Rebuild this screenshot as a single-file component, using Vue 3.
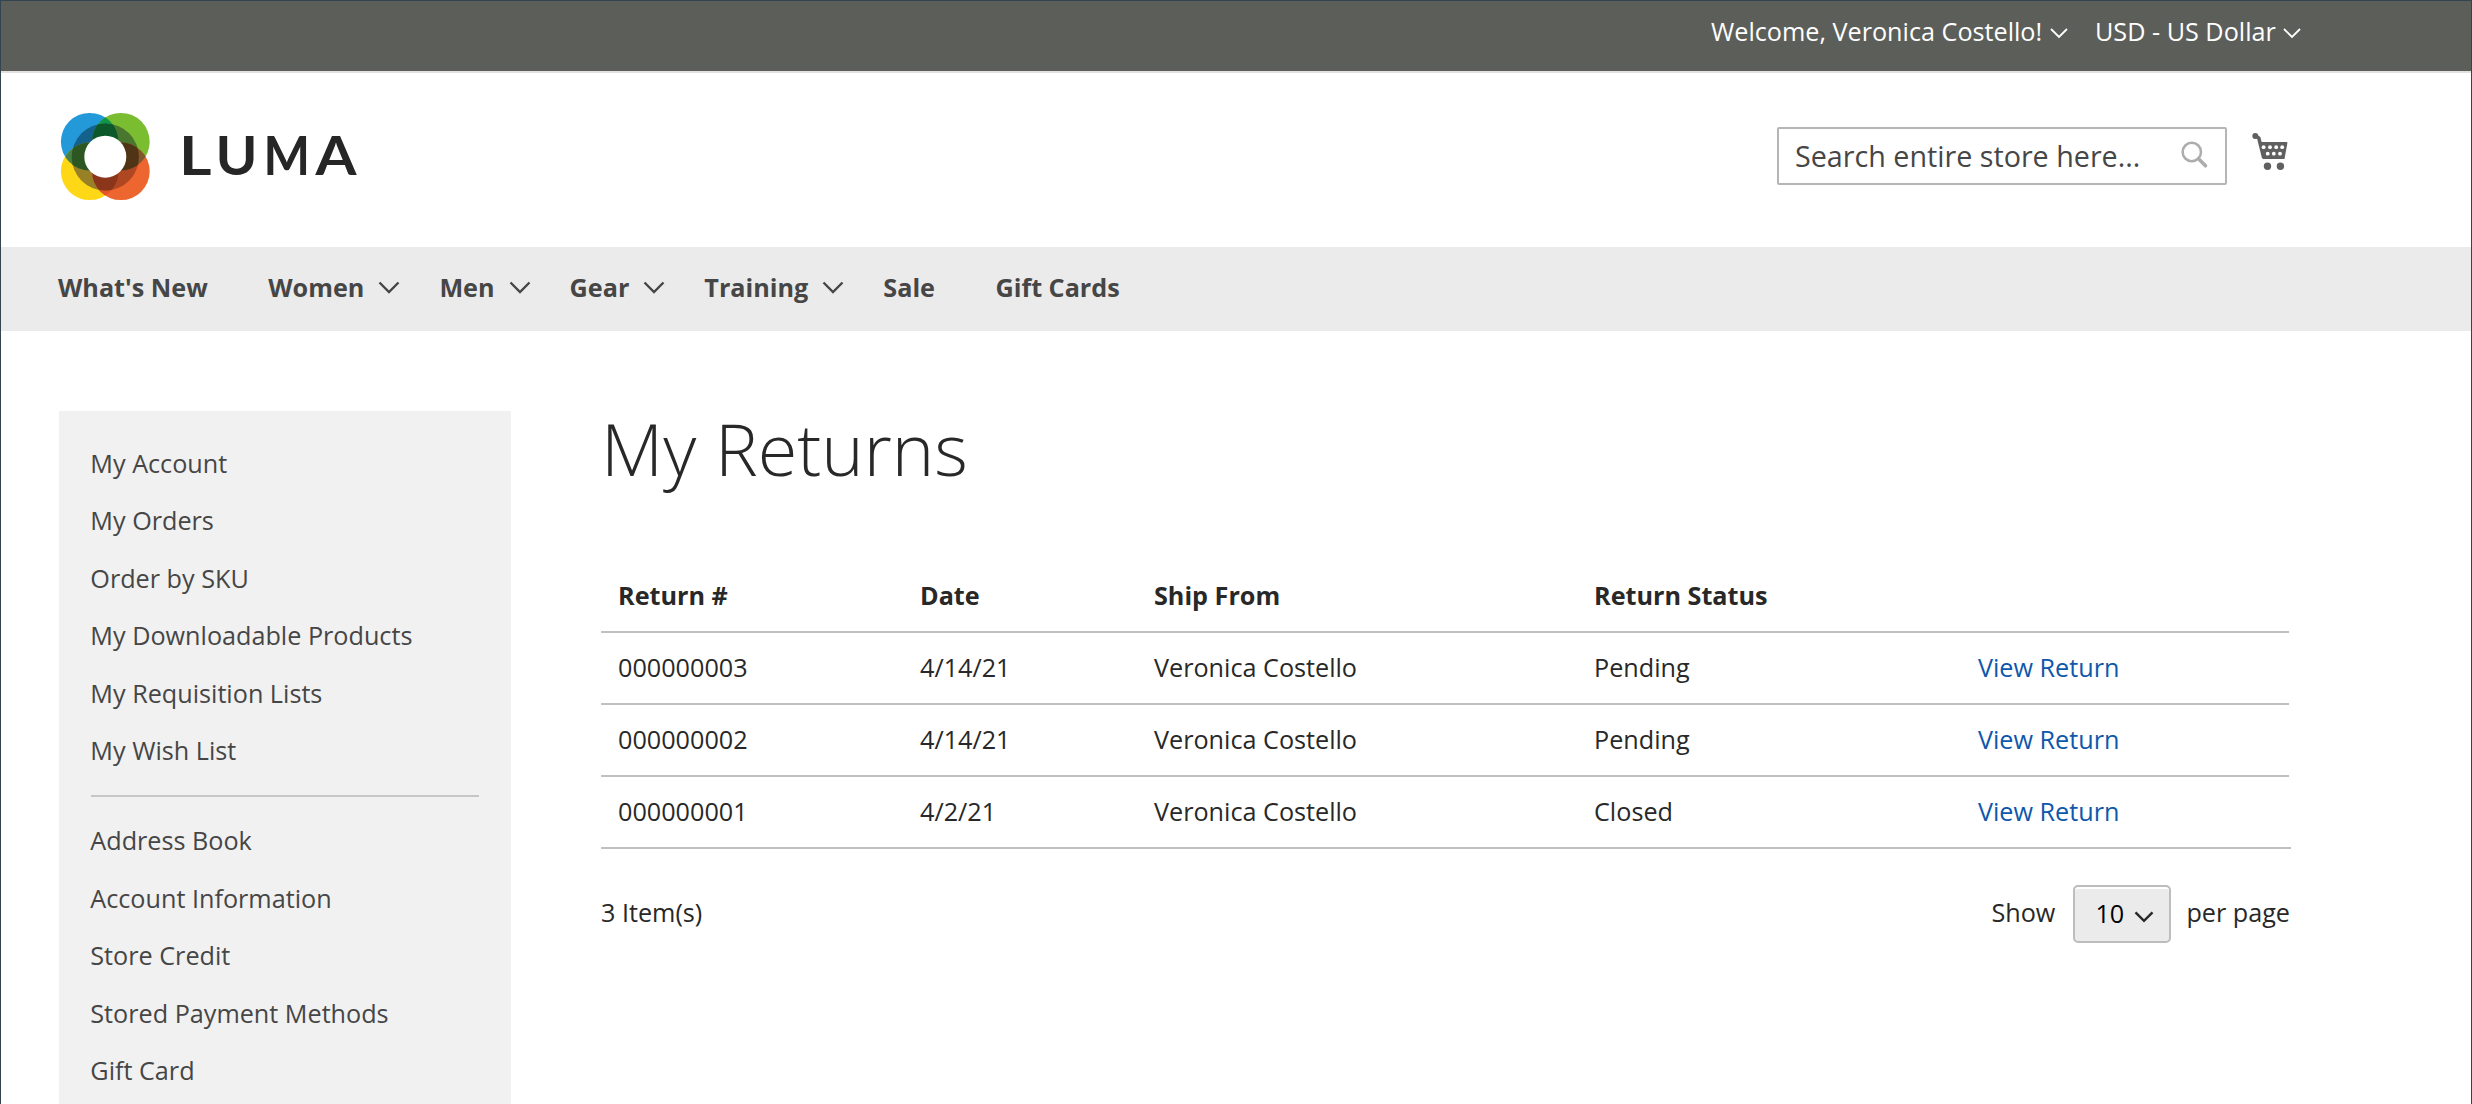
<script setup>
const nav = [
  { label: "What's New" },
  { label: 'Women', sub: true },
  { label: 'Men', sub: true },
  { label: 'Gear', sub: true },
  { label: 'Training', sub: true },
  { label: 'Sale' },
  { label: 'Gift Cards' },
]
const accountLinks = ['My Account', 'My Orders', 'Order by SKU', 'My Downloadable Products', 'My Requisition Lists', 'My Wish List']
const settingsLinks = ['Address Book', 'Account Information', 'Store Credit', 'Stored Payment Methods', 'Gift Card']
const returns = [
  { id: '000000003', date: '4/14/21', from: 'Veronica Costello', status: 'Pending' },
  { id: '000000002', date: '4/14/21', from: 'Veronica Costello', status: 'Pending' },
  { id: '000000001', date: '4/2/21', from: 'Veronica Costello', status: 'Closed' },
]
</script>

<template>
  <div class="page">
    <div class="panel">
      <span class="welcome">Welcome, Veronica Costello!</span>
      <svg class="chev-top" width="18" height="11" viewBox="0 0 18 11"><path d="M1 1l8 8 8-8" /></svg>
      <span class="currency">USD - US Dollar</span>
      <svg class="chev-top" width="18" height="11" viewBox="0 0 18 11"><path d="M1 1l8 8 8-8" /></svg>
    </div>

    <header class="header">
      <svg class="logo" width="300" height="90" viewBox="60 112 300 90">
        <defs>
          <clipPath id="blue"><circle cx="89.7" cy="141.7" r="28.8" /></clipPath>
          <clipPath id="green"><circle cx="120.9" cy="141.7" r="28.8" /></clipPath>
          <clipPath id="yellow"><circle cx="89.7" cy="171.3" r="28.8" /></clipPath>
          <clipPath id="orange"><circle cx="120.9" cy="171.3" r="28.8" /></clipPath>
        </defs>
        <circle cx="89.7" cy="141.7" r="28.8" fill="#2499da" />
        <circle cx="120.9" cy="141.7" r="28.8" fill="#7bbd31" />
        <circle cx="89.7" cy="171.3" r="28.8" fill="#fed817" />
        <circle cx="120.9" cy="171.3" r="28.8" fill="#ee662f" />
        <circle cx="120.9" cy="141.7" r="28.8" fill="#109547" clip-path="url(#blue)" />
        <circle cx="89.7" cy="171.3" r="28.8" fill="#48804a" clip-path="url(#blue)" />
        <circle cx="120.9" cy="171.3" r="28.8" fill="#80572f" clip-path="url(#green)" />
        <circle cx="120.9" cy="171.3" r="28.8" fill="#e65425" clip-path="url(#yellow)" />
        <circle cx="105.3" cy="157" r="33.6" fill="#14628c" clip-path="url(#blue)" />
        <circle cx="105.3" cy="157" r="33.6" fill="#4a772f" clip-path="url(#green)" />
        <circle cx="105.3" cy="157" r="33.6" fill="#988026" clip-path="url(#yellow)" />
        <circle cx="105.3" cy="157" r="33.6" fill="#af4723" clip-path="url(#orange)" />
        <g clip-path="url(#blue)">
          <g clip-path="url(#green)"><circle cx="105.3" cy="157" r="33.6" fill="#0d582b" /></g>
          <g clip-path="url(#yellow)"><circle cx="105.3" cy="157" r="33.6" fill="#2c5723" /></g>
        </g>
        <g clip-path="url(#orange)">
          <g clip-path="url(#green)"><circle cx="105.3" cy="157" r="33.6" fill="#503416" /></g>
          <g clip-path="url(#yellow)"><circle cx="105.3" cy="157" r="33.6" fill="#8b351b" /></g>
        </g>
        <circle cx="105.3" cy="156.7" r="21" fill="#fff" />
        <text class="wordmark" y="175"><tspan x="179" textLength="32.5" lengthAdjust="spacingAndGlyphs">L</tspan><tspan x="215.5" textLength="42" lengthAdjust="spacingAndGlyphs">U</tspan><tspan x="263.4" textLength="46.5" lengthAdjust="spacingAndGlyphs">M</tspan><tspan x="315.5" textLength="41" lengthAdjust="spacingAndGlyphs">A</tspan></text>
      </svg>
      <div class="search">
        <span>Search entire store here...</span>
        <svg width="30" height="30" viewBox="0 0 30 30"><circle cx="12.8" cy="11" r="9.2" fill="none" stroke="#adadad" stroke-width="2.5" /><path d="M19.5 17.8l7 7" stroke="#adadad" stroke-width="3.6" stroke-linecap="round" /></svg>
      </div>
      <svg class="cart" width="38" height="38" viewBox="0 0 38 38">
        <circle cx="3.3" cy="3" r="3" fill="#606060" />
        <path d="M3 2.5L6.8 5 11.8 25" fill="none" stroke="#606060" stroke-width="3.6" />
        <path d="M7 9H34.6Q35.6 9 35.4 10L32.5 26H11z" fill="#606060" />
        <g fill="#fff">
          <circle cx="11.6" cy="14.2" r="1.9" /><circle cx="18" cy="14.2" r="1.9" /><circle cx="24.2" cy="14.2" r="1.9" /><circle cx="30.2" cy="14.2" r="1.9" />
          <circle cx="15.7" cy="20.7" r="1.9" /><circle cx="21.8" cy="20.7" r="1.9" /><circle cx="28" cy="20.7" r="1.9" />
        </g>
        <circle cx="15.5" cy="33.3" r="3.7" fill="#606060" /><circle cx="28.4" cy="33.3" r="3.7" fill="#606060" />
      </svg>
    </header>

    <nav class="nav">
      <a v-for="n in nav" :key="n.label" :class="{ sub: n.sub }">
        <span>{{ n.label }}</span>
        <svg v-if="n.sub" width="22" height="14" viewBox="0 0 22 14"><path d="M1.5 1.5l9.5 9.5 9.5-9.5" /></svg>
      </a>
    </nav>

    <main class="content">
      <aside class="sidebar">
        <a v-for="l in accountLinks" :key="l">{{ l }}</a>
        <hr />
        <a v-for="l in settingsLinks" :key="l">{{ l }}</a>
      </aside>
      <section class="main">
        <h1>My Returns</h1>
        <div class="row head">
          <span>Return #</span><span>Date</span><span>Ship From</span><span>Return Status</span><span></span>
        </div>
        <div v-for="r in returns" :key="r.id" class="row">
          <span>{{ r.id }}</span><span>{{ r.date }}</span><span>{{ r.from }}</span><span>{{ r.status }}</span><a>View Return</a>
        </div>
        <div class="toolbar">
          <span class="count">3 Item(s)</span>
          <span>Show</span>
          <div class="select">
            <span>10</span>
            <svg width="20" height="12" viewBox="0 0 20 12"><path d="M1.5 1.3l8.5 8.5 8.5-8.5" /></svg>
          </div>
          <span>per page</span>
        </div>
      </section>
    </main>
  </div>
</template>

<style>
body { margin: 0; overflow: hidden; }
</style>

<style scoped>
.page {
  box-sizing: border-box;
  width: 2472px;
  height: 1104px;
  overflow: hidden;
  border: 1px solid #344551;
  border-bottom: 0;
  background: #fff;
  color: #282828;
  font: 25.2px/36px "Open Sans", "Noto Sans", sans-serif;
  white-space: nowrap;
}
.panel {
  box-sizing: border-box;
  height: 72px;
  display: flex;
  padding: 12px 0 0 1710px;
  background: #5c5e5a;
  border-bottom: 2px solid #e4e0e1;
  color: #fff;
}
.welcome { width: 339px; }
.currency { width: 188px; margin-left: 27px; }
.chev-top { margin-top: 15px; }
.chev-top path { fill: none; stroke: #fff; stroke-width: 1.8; }
.header { height: 174px; display: flex; align-items: flex-start; }
.logo { margin: 39px 1417px 0 59px; flex: none; }
.wordmark { font: 700 53px Lato, sans-serif; fill: #262626; }
.search {
  box-sizing: border-box;
  width: 450px;
  height: 58px;
  margin-top: 54px;
  padding: 0 16px;
  border: 2px solid #b5b5b5;
  border-radius: 2px;
  display: flex;
  align-items: center;
  justify-content: space-between;
  font-size: 28.7px;
  color: #464646;
}
.search span { padding-bottom: 1px; }
.cart { margin: 60px 0 0 25px; }
.nav {
  height: 84px;
  box-sizing: border-box;
  padding: 22px 0 0 57px;
  background: #ebebeb;
  display: flex;
  font-weight: 700;
  color: #464646;
}
.nav a { display: flex; margin-right: 60.5px; }
.nav a.sub { margin-right: 39px; }
.nav svg { margin: 12px 0 0 14px; }
.nav path { fill: none; stroke: #464646; stroke-width: 2.4; }
.content { display: flex; padding: 80px 0 0 58px; }
.sidebar {
  box-sizing: border-box;
  width: 452px;
  height: 720px;
  padding: 23.5px 32px;
  background: #f1f1f1;
  color: #464646;
}
.sidebar a { display: block; height: 57.6px; margin-left: -0.7px; line-height: 57.6px; }
.sidebar hr { height: 2px; margin: 15px 0 15px; border: 0; background: #c6c6c6; }
.main { width: 1688px; margin-left: 90px; }
h1 { margin: 0; font-size: 72px; font-weight: 300; line-height: 74px; }
.row {
  display: grid;
  grid-template-columns: 302px 234px 440px 384px 1fr;
  box-sizing: border-box;
  height: 72px;
  padding: 16px 0 0 17px;
  border-bottom: 2px solid #c0c0c0;
}
.row.head { margin-top: 76px; font-weight: 700; }
.row:nth-last-child(2) { margin-right: -2px; }
.row a { color: #0d58ab; }
.toolbar { display: flex; align-items: flex-start; margin: 36px -1px 0 0; height: 60px; line-height: 54px; }
.count { flex: 1; }
.select {
  box-sizing: border-box;
  width: 98px;
  height: 58px;
  margin: 0 15px 0 18px;
  padding-left: 20px;
  display: flex;
  align-items: center;
  border: 2px solid #bdbdbd;
  border-radius: 5px;
  background: #ebebeb;
  box-shadow: inset 0 2px 0 #fff;
  color: #000;
}
.select span { padding-bottom: 2px; }
.select svg { margin: 5px 0 0 10px; }
.select path { fill: none; stroke: #282828; stroke-width: 2.4; }
</style>
